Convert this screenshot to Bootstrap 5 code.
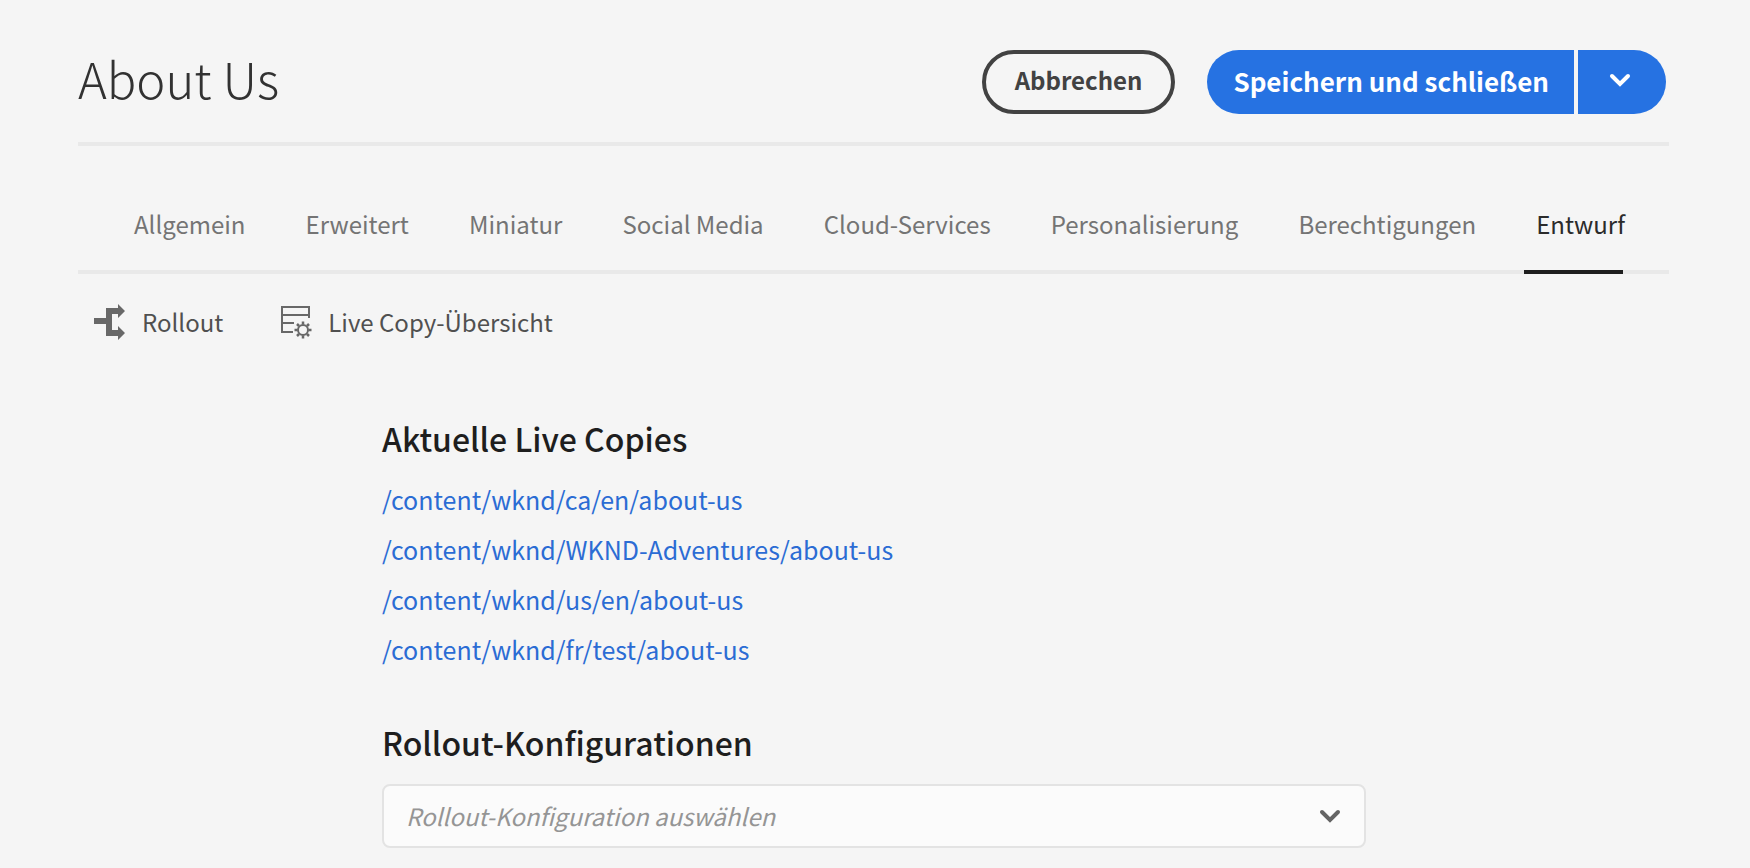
<!DOCTYPE html>
<html lang="de">
<head>
<meta charset="utf-8">
<meta name="viewport" content="width=device-width, initial-scale=1">
<title>About Us</title>
<link href="https://cdn.jsdelivr.net/npm/bootstrap@5.3.0/dist/css/bootstrap.min.css" rel="stylesheet">
<style>
body{background:#f5f5f5;color:#1e1e1e;font-family:"Noto Sans CJK JP","Noto Sans",sans-serif;font-size:24px;line-height:40px}
.page{padding:50px 81px 18px 78px}
.page-head{padding-bottom:28px;border-bottom:4px solid #e9e9e9}
.page-title{font-size:49px;line-height:56px;font-weight:300;color:#323232}
.actions{gap:32px;padding-right:3px}
.btn{font-size:26px;line-height:40px;font-weight:700;height:64px;border-radius:32px;padding:0 26px 2px}
.btn-cancel{border:4px solid #424242;color:#424242;font-size:24px;padding:0 29px 4px}
.btn-save,.btn-save:hover{background:#2672e2;color:#fff;border:0}
.btn-more{border-left:4px solid #f5f5f5!important;width:92px;padding:0 4px 4px 0}
.tab-bar{border-bottom:4px solid #e9e9e9;padding:0 44px 0 56px;height:128px}
.tab-bar .nav-link{padding:58px 0 0;color:#747474;position:relative;height:124px;font-size:24px}
.tab-bar .nav-link.active{color:#2b2b2b}
.tab-bar .active::after{content:"";position:absolute;left:-12px;right:2px;bottom:-4px;height:4px;background:#1e1e1e}
.tools{padding:28px 16px 0;gap:58px}
.tool{color:#505050;gap:16px}
.content{margin-left:304px;max-width:984px;padding-top:72px}
.section-title{font-size:32px;line-height:48px;font-weight:500;color:#1e1e1e}
.copies{margin:12px 0 44px}
.copies li{height:50px;line-height:50px;font-size:25px}
.copies a{color:#2b6cd4}
.config-select{height:64px;margin-top:18px;font-size:24px;line-height:40px;font-style:italic;color:#959595;background-color:#fbfbfb;border:2px solid #e3e3e3;border-radius:8px;padding:0 64px 0 22px;background-image:url("data:image/svg+xml,%3Csvg xmlns='http://www.w3.org/2000/svg' viewBox='0 0 22 14'%3E%3Cpath d='M3 3l8 8 8-8' fill='none' stroke='%23646464' stroke-width='4' stroke-linecap='round'/%3E%3C/svg%3E");background-size:22px 14px;background-position:right 23px center}
</style>
</head>
<body>
<main class="page">
  <header class="page-head d-flex justify-content-between align-items-start">
    <h1 class="page-title mb-0">About Us</h1>
    <div class="actions d-flex align-items-center">
      <button type="button" class="btn btn-cancel">Abbrechen</button>
      <div class="btn-group">
        <button type="button" class="btn btn-save">Speichern und schließen</button>
        <button type="button" class="btn btn-save btn-more d-flex align-items-center justify-content-center" aria-label="Weitere Optionen">
          <svg width="22" height="16" viewBox="0 0 22 16" fill="none" stroke="#fff" stroke-width="4" stroke-linecap="round"><path d="M3 4l8 8 8-8"/></svg>
        </button>
      </div>
    </div>
  </header>

  <nav class="tab-bar nav flex-nowrap justify-content-between" aria-label="Eigenschaften">
    <a class="nav-link" href="#">Allgemein</a>
    <a class="nav-link" href="#">Erweitert</a>
    <a class="nav-link" href="#">Miniatur</a>
    <a class="nav-link" href="#">Social Media</a>
    <a class="nav-link" href="#">Cloud-Services</a>
    <a class="nav-link" href="#">Personalisierung</a>
    <a class="nav-link" href="#">Berechtigungen</a>
    <a class="nav-link active" aria-current="page" href="#">Entwurf</a>
  </nav>

  <div class="tools d-flex">
    <a href="#" class="tool d-flex align-items-center text-decoration-none">
      <svg width="32" height="36" viewBox="0 0 32 36" fill="#686868"><path d="M0 14h12V4h12V0l7 7-7 7v-4h-6v16h6v-4l7 7-7 7v-4H12V20H0z"/></svg>
      Rollout
    </a>
    <a href="#" class="tool d-flex align-items-center text-decoration-none">
      <svg width="31" height="34" viewBox="0 0 31 34" fill="none" stroke="#686868" stroke-width="2"><path d="M28 13V2H1v25h11M1 10h27M1 18h12"/><circle cx="22" cy="25" r="5"/><path stroke-width="2.500" d="M22 16.500v3M22 30.500v3M13.500 25h3M27.500 25h3M16 19l2 2M26 29l2 2M28 19l-2 2M16 31l2-2"/></svg>
      Live Copy-Übersicht
    </a>
  </div>

  <div class="content">
    <h2 class="section-title mb-0">Aktuelle Live Copies</h2>
    <ul class="copies list-unstyled">
      <li><a class="text-decoration-none" href="#">/content/wknd/ca/en/about-us</a></li>
      <li><a class="text-decoration-none" href="#">/content/wknd/WKND-Adventures/about-us</a></li>
      <li><a class="text-decoration-none" href="#">/content/wknd/us/en/about-us</a></li>
      <li><a class="text-decoration-none" href="#">/content/wknd/fr/test/about-us</a></li>
    </ul>
    <label class="section-title d-block" for="rollout-config">Rollout-Konfigurationen</label>
    <select class="form-select config-select" id="rollout-config">
      <option selected>Rollout-Konfiguration auswählen</option>
    </select>
  </div>
</main>
<script src="https://cdn.jsdelivr.net/npm/bootstrap@5.3.0/dist/js/bootstrap.bundle.min.js"></script>
</body>
</html>
